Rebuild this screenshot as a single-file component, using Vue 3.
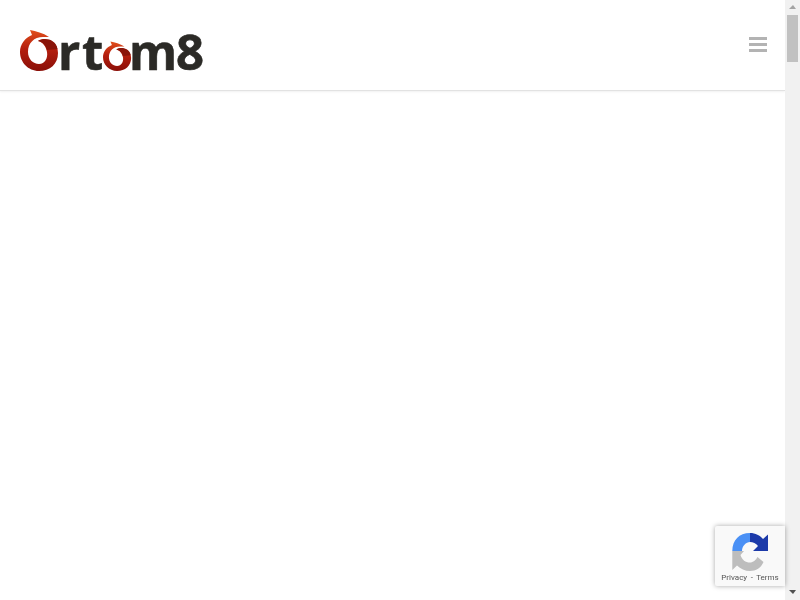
<template>
  <div class="page">
    <div class="content">
      <header class="site-header">
        <a class="logo" href="#" aria-label="Ortom8">
          <svg width="184" height="70" viewBox="0 -14 184 70">
            <defs>
              <linearGradient id="swirl" x1="0" y1="0" x2="0" y2="1">
                <stop offset="0" stop-color="#e2501c" />
                <stop offset="0.45" stop-color="#b51f0e" />
                <stop offset="1" stop-color="#8a0f08" />
              </linearGradient>
            </defs>
            <path fill="url(#swirl)" :d="swirlBody" />
            <path fill="#8a1409" :d="swirlShade" />
            <g transform="translate(83 11.5) scale(0.74 0.72)">
              <path fill="url(#swirl)" :d="swirlBody" />
              <path fill="#8a1409" :d="swirlShade" />
            </g>
            <text class="logo-text" x="38" y="40">r</text>
            <text class="logo-text" x="62" y="40">t</text>
            <text class="logo-text" x="109" y="40">m</text>
            <text class="logo-text" x="156" y="40">8</text>
          </svg>
        </a>
        <button class="menu-toggle" aria-label="Menu">
          <span></span>
          <span></span>
          <span></span>
        </button>
      </header>
    </div>

    <div class="scrollbar">
      <div class="arrow arrow-up"></div>
      <div class="track">
        <div class="thumb"></div>
      </div>
      <div class="arrow arrow-down"></div>
    </div>

    <div class="recaptcha">
      <svg width="38" height="38" viewBox="0 0 38 38">
        <path fill="#4a90f5" d="M19 0 C8 0 1.5 7 1.3 18 L11 18 C11 13 15 9 19 9 Z" />
        <path fill="#1c3aa9" d="M19 0 C24.5 0 29 2.5 32 6 L37 1.5 L37 18 L22 18 L27 13 C25 10.5 22 9 19 9 Z" />
        <path fill="#bdbdbd" d="M1.3 18 L1.3 37 L6 32.5 C9.5 36 14 38 19 38 C25 38 30 35 32.5 29 L26.5 24 C25 27 22 29.5 19 29.5 C14.5 29.5 11 27 9.5 22 L13 18 Z" />
      </svg>
      <div class="recaptcha-links">Privacy <span class="dash">-</span> Terms</div>
    </div>
  </div>
</template>

<script setup>
// the two O's of the logo are the same swirl at different sizes
const swirlBody = 'M10 0 C16 1 23 3 29 7 L23 7 C14 7 8 13 8 22 C8 29 13 34 19 34 C25 34 28 28 27 22 C26 17 23 12 18 11 C24 7 38 10 38 23 C38 34 30 41 19 41 C8 41 0 32 0 22 C0 14 5 8 12 5 Z'
const swirlShade = 'M18 11 C24 7 36 9 37.5 19 L27 20 C26 16 23 12 18 11 Z'
</script>

<style scoped>
.page {
  display: flex;
  height: 600px;
  overflow: hidden;
  background: #fff;
  font-family: "Roboto", "Liberation Sans", sans-serif;
}

.content {
  flex: 1;
  min-width: 0;
}

.site-header {
  display: flex;
  align-items: center;
  justify-content: space-between;
  box-sizing: border-box;
  height: 91px;
  padding: 0 18px 0 20px;
  border-bottom: 1px solid #e2e2e2;
  box-shadow: 0 1px 2px rgba(0, 0, 0, 0.06);
}

.logo {
  display: block;
  height: 70px;
  margin-top: 12px;
}

.logo-text {
  font-family: "Open Sans", sans-serif;
  font-size: 49px;
  font-weight: 700;
  fill: #2b2a26;
  stroke: #2b2a26;
  stroke-width: 0.6px;
}

.menu-toggle {
  display: flex;
  flex-direction: column;
  gap: 3px;
  margin-bottom: 1px;
  padding: 0;
  border: none;
  background: none;
}

.menu-toggle span {
  display: block;
  width: 18px;
  height: 3px;
  background: #b3b3b3;
}

.scrollbar {
  display: flex;
  flex-direction: column;
  width: 15px;
  background: #f1f1f1;
}

.arrow {
  height: 15px;
  position: relative;
}

.arrow::after {
  content: "";
  position: absolute;
  left: 4px;
  top: 5px;
  border-left: 4px solid transparent;
  border-right: 3px solid transparent;
}

.arrow-up::after {
  border-bottom: 4px solid #a3a3a3;
}

.arrow-down::after {
  border-top: 4px solid #505050;
}

.track {
  flex: 1;
}

.thumb {
  width: 11px;
  height: 47px;
  margin-left: 2px;
  background: #c1c1c1;
}

.recaptcha {
  position: fixed;
  right: 15px;
  bottom: 14px;
  display: flex;
  flex-direction: column;
  align-items: center;
  box-sizing: border-box;
  width: 70px;
  height: 60px;
  padding-top: 7px;
  background: #f9f9f9;
  border-radius: 2px 0 0 2px;
  box-shadow: 0 0 5px rgba(0, 0, 0, 0.35);
}

.recaptcha-links {
  margin-top: 1px;
  font-size: 8px;
  line-height: 12px;
  color: #555;
  white-space: nowrap;
}

.dash {
  margin: 0 1.5px;
}
</style>
